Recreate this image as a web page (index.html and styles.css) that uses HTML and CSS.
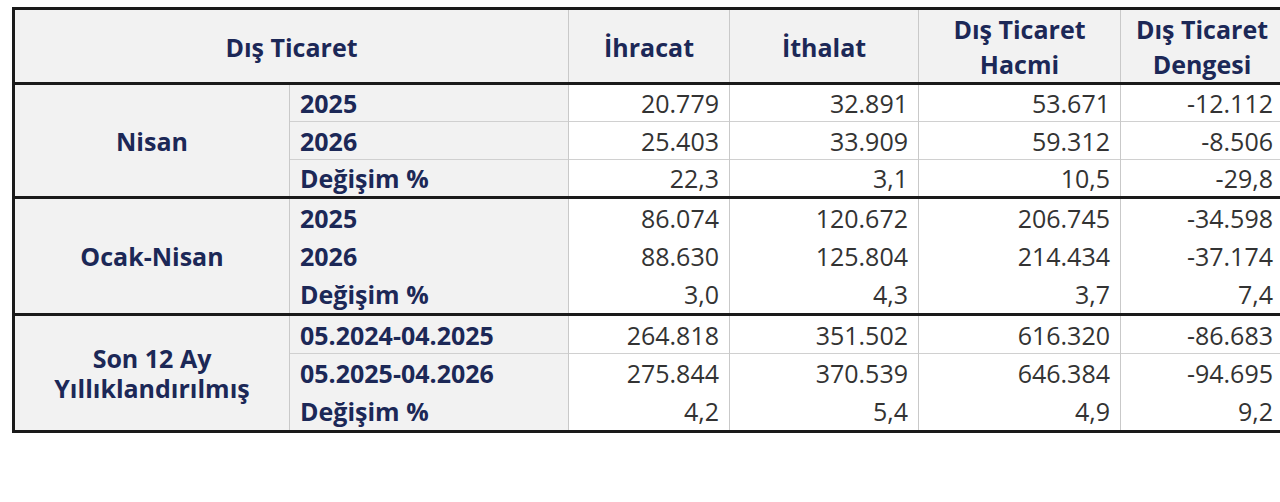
FILE: index.html
```html
<!DOCTYPE html>
<html lang="tr">
<head>
<meta charset="utf-8">
<link rel="stylesheet" href="styles.css">
</head>
<body>
<div class="wrap">
<table class="trade">
  <colgroup>
    <col class="c1"><col class="c2"><col class="c3"><col class="c4"><col class="c5"><col class="c6">
  </colgroup>
  <thead>
    <tr class="head">
      <th colspan="2">Dış Ticaret</th>
      <th>İhracat</th>
      <th>İthalat</th>
      <th>Dış Ticaret<br>Hacmi</th>
      <th>Dış Ticaret<br>Dengesi</th>
    </tr>
  </thead>
  <tbody class="grp lined">
    <tr class="first">
      <th class="grp-label" rowspan="3">Nisan</th>
      <th class="sub">2025</th>
      <td>20.779</td><td>32.891</td><td>53.671</td><td>-12.112</td>
    </tr>
    <tr>
      <th class="sub">2026</th>
      <td>25.403</td><td>33.909</td><td>59.312</td><td>-8.506</td>
    </tr>
    <tr>
      <th class="sub">Değişim %</th>
      <td>22,3</td><td>3,1</td><td>10,5</td><td>-29,8</td>
    </tr>
  </tbody>
  <tbody class="grp tall">
    <tr class="first">
      <th class="grp-label" rowspan="3">Ocak-Nisan</th>
      <th class="sub">2025</th>
      <td>86.074</td><td>120.672</td><td>206.745</td><td>-34.598</td>
    </tr>
    <tr>
      <th class="sub">2026</th>
      <td>88.630</td><td>125.804</td><td>214.434</td><td>-37.174</td>
    </tr>
    <tr>
      <th class="sub">Değişim %</th>
      <td>3,0</td><td>4,3</td><td>3,7</td><td>7,4</td>
    </tr>
  </tbody>
  <tbody class="grp tall">
    <tr class="first">
      <th class="grp-label" rowspan="3">Son 12 Ay<br>Yıllıklandırılmış</th>
      <th class="sub">05.2024-04.2025</th>
      <td>264.818</td><td>351.502</td><td>616.320</td><td>-86.683</td>
    </tr>
    <tr class="sep">
      <th class="sub">05.2025-04.2026</th>
      <td>275.844</td><td>370.539</td><td>646.384</td><td>-94.695</td>
    </tr>
    <tr>
      <th class="sub">Değişim %</th>
      <td>4,2</td><td>5,4</td><td>4,9</td><td>9,2</td>
    </tr>
  </tbody>
</table>
</div>
</body>
</html>
```

FILE: styles.css
```css
html, body {
  margin: 0;
  padding: 0;
  background: #ffffff;
  overflow: hidden;
}

.wrap {
  padding: 7px 0 0 12px;
  width: 1300px;
}

.trade {
  border-collapse: collapse;
  table-layout: fixed;
  width: 1270px;
  font-family: "Open Sans", "Noto Sans", sans-serif;
  font-size: 25px;
  color: #333333;
  border-top: 3px solid #1a1a1a;
  border-left: 3px solid #1a1a1a;
  border-bottom: 3px solid #1a1a1a;
}

.c1 { width: 276px; }
.c2 { width: 279px; }
.c3 { width: 161px; }
.c4 { width: 189px; }
.c5 { width: 202px; }
.c6 { width: 163px; }

.trade th,
.trade td {
  padding: 0 10px;
  border-left: 1px solid #c9c9c9;
  border-right: 1px solid #c9c9c9;
  white-space: nowrap;
  line-height: 30px;
}

.head th {
  height: 70px;
  padding-top: 2px;
  background: #f2f2f2;
  color: #1c2857;
  font-weight: 700;
  text-align: center;
  line-height: 35px;
  border-bottom: 3px solid #1a1a1a;
}

.grp {
  border-top: 3px solid #1a1a1a;
}

.grp tr {
  height: 38px;
}

.grp.tall tr {
  height: 39px;
}

.grp-label {
  background: #f2f2f2;
  color: #1c2857;
  font-weight: 700;
  text-align: center;
  line-height: 32px;
}

.sub {
  background: #f2f2f2;
  color: #1c2857;
  font-weight: 700;
  text-align: left;
}

.trade td {
  text-align: right;
  background: #ffffff;
}

.lined tr + tr th.sub,
.lined tr + tr td,
.sep th.sub,
.sep td {
  border-top: 1px solid #d0d0d0;
}
```
